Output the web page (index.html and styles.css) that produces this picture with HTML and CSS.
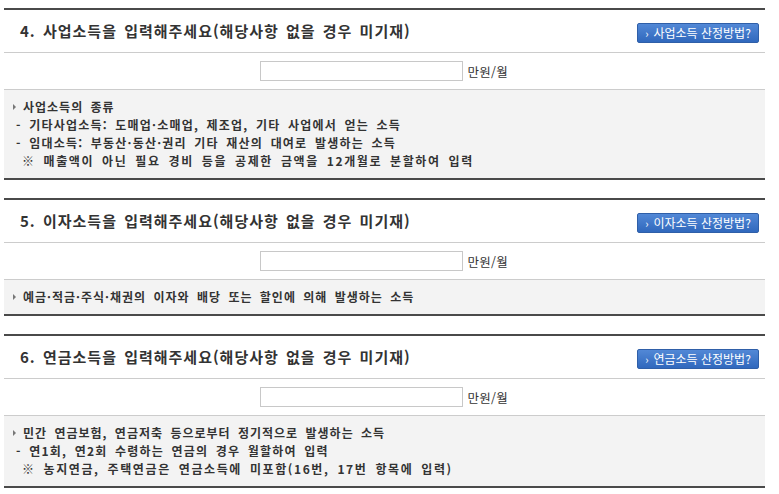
FILE: index.html
```html
<!DOCTYPE html>
<html lang="ko">
<head>
<meta charset="utf-8">
<link rel="stylesheet" href="styles.css">
</head>
<body>
<div class="wrap">
  <section class="sec">
    <div class="head">
      <h3 class="title">4. 사업소득을 입력해주세요(해당사항 없을 경우 미기재)</h3>
      <button class="btn"><span class="arr">›</span>사업소득 산정방법?</button>
    </div>
    <div class="inrow"><input class="inp" type="text"><span class="unit">만원/월</span></div>
    <div class="info">
      <p class="l1"><span class="bul"></span>사업소득의 종류</p>
      <p class="l2">- 기타사업소득: 도매업·소매업, 제조업, 기타 사업에서 얻는 소득</p>
      <p class="l2">- 임대소득: 부동산·동산·권리 기타 재산의 대여로 발생하는 소득</p>
      <p class="l3">※ 매출액이 아닌 필요 경비 등을 공제한 금액을 12개월로 분할하여 입력</p>
    </div>
  </section>
  <section class="sec">
    <div class="head">
      <h3 class="title">5. 이자소득을 입력해주세요(해당사항 없을 경우 미기재)</h3>
      <button class="btn"><span class="arr">›</span>이자소득 산정방법?</button>
    </div>
    <div class="inrow"><input class="inp" type="text"><span class="unit">만원/월</span></div>
    <div class="info">
      <p class="l1"><span class="bul"></span>예금·적금·주식·채권의 이자와 배당 또는 할인에 의해 발생하는 소득</p>
    </div>
  </section>
  <section class="sec">
    <div class="head">
      <h3 class="title">6. 연금소득을 입력해주세요(해당사항 없을 경우 미기재)</h3>
      <button class="btn"><span class="arr">›</span>연금소득 산정방법?</button>
    </div>
    <div class="inrow"><input class="inp" type="text"><span class="unit">만원/월</span></div>
    <div class="info">
      <p class="l1"><span class="bul"></span>민간 연금보험, 연금저축 등으로부터 정기적으로 발생하는 소득</p>
      <p class="l2">- 연1회, 연2회 수령하는 연금의 경우 월할하여 입력</p>
      <p class="l3">※ 농지연금, 주택연금은 연금소득에 미포함(16번, 17번 항목에 입력)</p>
    </div>
  </section>
</div>
</body>
</html>
```
FILE: styles.css
```css
html, body { margin: 0; padding: 0; background: #fff; }
body { font-family: "Noto Sans CJK KR", "Noto Sans", sans-serif; color: #333; }
.wrap { width: 761px; margin: 8px 0 0 4px; }
.sec { border-top: 2px solid #4a4a4a; border-bottom: 2px solid #4a4a4a; margin-bottom: 18px; }
.head { height: 42px; display: flex; align-items: center; justify-content: space-between; padding: 0 6px 0 16px; border-bottom: 1px solid #ccc; }
.title { margin: 0; font-size: 15px; font-weight: 700; color: #333; letter-spacing: 1px; word-spacing: 2px; line-height: 20px; }
.btn { width: 122px; height: 20px; margin-top: 4px; border: 1px solid #2f5fa8; border-radius: 2px; background: linear-gradient(#5288d6, #3068bd); color: #fff; font-family: inherit; font-size: 12px; line-height: 16px; padding: 0; display: flex; align-items: center; justify-content: center; gap: 5px; }
.arr { font-size: 11px; }
.inrow { height: 36px; display: flex; align-items: center; justify-content: center; gap: 5px; border-bottom: 1px solid #ccc; }
.inp { width: 203px; height: 20px; box-sizing: border-box; border: 1px solid #c8c8c8; margin: 0; padding: 0 4px; }
.unit { font-size: 12.5px; color: #333; width: 42px; letter-spacing: 0.3px; }
.info { background: #f3f3f3; padding: 8px 0; }
.info p { margin: 0; font-size: 12px; font-weight: 700; line-height: 18px; letter-spacing: 1px; word-spacing: 3px; color: #333; }
.l1 { padding-left: 9px; display: flex; align-items: center; }
.bul { width: 0; height: 0; border-left: 3px solid #777; border-top: 3px solid transparent; border-bottom: 3px solid transparent; margin-right: 7px; }
.info .l2 { padding-left: 12px; letter-spacing: 1.2px; }
.info .l3 { padding-left: 18px; letter-spacing: 1.6px; }
```
